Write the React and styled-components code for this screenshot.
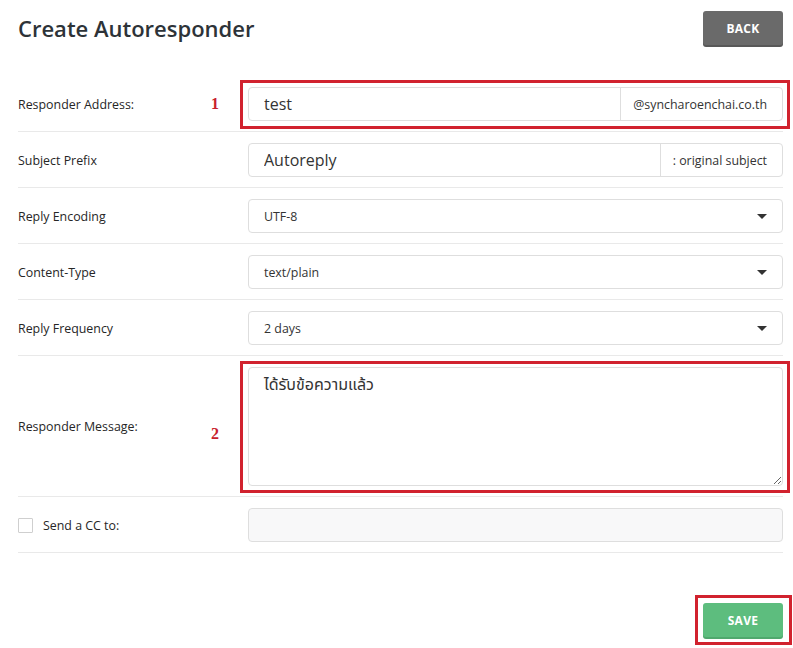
import React from 'react';
import styled, { createGlobalStyle } from 'styled-components';

const GlobalStyle = createGlobalStyle`
    body {
        margin: 0;
        background: #fff;
        font-family: "Open Sans", "Noto Sans", sans-serif;
        color: #333;
    }
`

const Page = styled.div`
    width: 793px;
    height: 648px;
    box-sizing: border-box;
    padding: 11px 10px 0 18px;
    overflow: hidden;
`
const Header = styled.div`
    display: flex;
    justify-content: space-between;
    align-items: center;
    height: 34px;
    margin-bottom: 31px;
`
const Title = styled.h1`
    margin: 0;
    font-size: 22px;
    font-weight: 600;
    color: #2d3338;
`
const Button = styled.button`
    width: 80px;
    height: 34px;
    border: none;
    border-radius: 3px;
    background: ${p => p.$bg};
    box-shadow: 0 2px 0 ${p => p.$shade};
    color: #fff;
    font-family: "Open Sans", sans-serif;
    font-size: 12px;
    font-weight: 700;
    letter-spacing: 0.3px;
    cursor: pointer;
`
const Row = styled.div`
    display: grid;
    grid-template-columns: 193px 37px 1fr;
    align-items: center;
    padding: 11px 0 10px;
    border-bottom: 1px solid #e9e9e9;
`
const Label = styled.label`
    display: flex;
    align-items: center;
    gap: 10px;
    font-size: 12.4px;
    color: #262626;
`
const Marker = styled.span`
    font-family: "Liberation Serif", serif;
    font-weight: 700;
    font-size: 16px;
    color: #c8202c;
    margin-top: ${p => p.$offset || 0}px;
`
const Field = styled.div`
    position: relative;
`
const Highlight = styled.div`
    position: absolute;
    top: ${p => p.$top}px;
    bottom: ${p => p.$bottom}px;
    left: -8px;
    right: -7px;
    border: 3px solid #d1222e;
    pointer-events: none;
`
const Group = styled.div`
    display: flex;
    height: 34px;
    box-sizing: border-box;
    border: 1px solid #dedede;
    border-radius: 4px;
    background: ${p => (p.$muted ? '#f8f8f9' : '#fff')};
    overflow: hidden;
`
const Input = styled.input`
    flex: 1;
    min-width: 0;
    border: none;
    outline: none;
    background: transparent;
    padding: 0 15px;
    font-family: "Open Sans", sans-serif;
    font-size: 16px;
    color: #333;
`
const Addon = styled.span`
    display: flex;
    align-items: center;
    padding: 0 15px 0 12px;
    border-left: 1px solid #dedede;
    font-size: 12.4px;
    color: #333;
    white-space: nowrap;
`
const SelectBox = styled.div`
    display: flex;
    align-items: center;
    justify-content: space-between;
    height: 34px;
    box-sizing: border-box;
    padding: 0 15px;
    border: 1px solid #dedede;
    border-radius: 4px;
    font-size: 12.4px;
    color: #333;
`
const Caret = styled.span`
    width: 0;
    height: 0;
    border-left: 5px solid transparent;
    border-right: 5px solid transparent;
    border-top: 5px solid #333;
`
const TextArea = styled.textarea`
    display: block;
    width: 100%;
    height: 119px;
    box-sizing: border-box;
    padding: 5px 15px;
    border: 1px solid #dedede;
    border-radius: 4px;
    outline: none;
    font-family: "Open Sans", "Noto Sans Thai", "Tahoma", sans-serif;
    font-size: 16px;
    color: #333;
    resize: both;
`
const Checkbox = styled.span`
    width: 13px;
    height: 13px;
    border: 1px solid #cfcfcf;
    border-radius: 1px;
    background: #fff;
`
const Footer = styled.div`
    display: flex;
    justify-content: flex-end;
    margin-top: 50px;
`
const SaveWrap = styled.div`
    position: relative;
`
const SaveBox = styled.div`
    position: absolute;
    top: -8px;
    bottom: -8px;
    left: -8px;
    right: -9px;
    border: 3px solid #d1222e;
    pointer-events: none;
`

const selects = [
    { label: 'Reply Encoding', value: 'UTF-8' },
    { label: 'Content-Type', value: 'text/plain' },
    { label: 'Reply Frequency', value: '2 days' },
]

const App = () => {
    return (
        <Page>
            <GlobalStyle />
            <Header>
                <Title>Create Autoresponder</Title>
                <Button $bg="#6a6a6a" $shade="#585858">BACK</Button>
            </Header>

            <Row>
                <Label>Responder Address:</Label>
                <Marker>1</Marker>
                <Field>
                    <Group>
                        <Input defaultValue="test" />
                        <Addon>@syncharoenchai.co.th</Addon>
                    </Group>
                    <Highlight $top={-7} $bottom={-8} />
                </Field>
            </Row>

            <Row>
                <Label>Subject Prefix</Label>
                <span />
                <Field>
                    <Group>
                        <Input defaultValue="Autoreply" />
                        <Addon>: original subject</Addon>
                    </Group>
                </Field>
            </Row>

            {selects.map(s => (
                <Row key={s.label}>
                    <Label>{s.label}</Label>
                    <span />
                    <SelectBox>
                        {s.value}
                        <Caret />
                    </SelectBox>
                </Row>
            ))}

            <Row>
                <Label>Responder Message:</Label>
                <Marker $offset={14}>2</Marker>
                <Field>
                    <TextArea defaultValue="ได้รับข้อความแล้ว" />
                    <Highlight $top={-6} $bottom={-7} />
                </Field>
            </Row>

            <Row>
                <Label>
                    <Checkbox />
                    Send a CC to:
                </Label>
                <span />
                <Group $muted>
                    <Input />
                </Group>
            </Row>

            <Footer>
                <SaveWrap>
                    <Button $bg="#5dbd7e" $shade="#4fa86d">SAVE</Button>
                    <SaveBox />
                </SaveWrap>
            </Footer>
        </Page>
    )
}

export default App
